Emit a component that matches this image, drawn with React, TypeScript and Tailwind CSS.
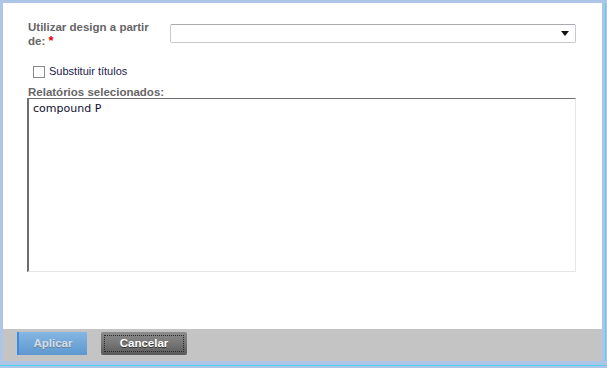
import React from "react";

export default function App() {
  const label = "font-bold text-[#666666]";
  return (
    <div
      className="w-[607px] h-[368px] bg-[#adc5e6] flex flex-col pt-[3px] pl-[3px] pr-[1px] overflow-hidden"
      style={{ fontFamily: '"Liberation Sans", Arial, sans-serif' }}
    >
      <div className="flex flex-1">
        <div className="flex flex-col w-[599px]">
          {/* content */}
          <div className="bg-white h-[326px] flex flex-col pl-[25px] pr-[23px] pt-[18px]">
            <div className="flex items-start">
              <div className={`${label} w-[141px] text-[11.5px] leading-[13px]`}>
                Utilizar design a partir
                <br />
                de: <span className="text-[#e00000] text-[13px]">*</span>
              </div>
              <div className="ml-[1px] w-[406px] h-[19px] mt-[3px] border border-[#c6c9d1] border-t-[#a9a9b0] rounded-[2px] flex items-center justify-end pr-[6px]">
                <svg width="8" height="5" viewBox="0 0 8 5">
                  <path d="M0 0 H8 L4 5 Z" fill="#111" />
                </svg>
              </div>
            </div>
            <div className="flex items-center mt-[17px] ml-[5px]">
              <div className="w-[12px] h-[12px] border border-[#8b8b8b] bg-white" />
              <span className="ml-[4px] text-[11px] text-[#1b1b4d] leading-[13px]">
                Substituir títulos
              </span>
            </div>
            <div className={`${label} mt-[8px] text-[11.5px] leading-[12px]`}>
              Relatórios selecionados:
            </div>
            <div className="mt-0 -ml-[1px] w-[549px] h-[174px] border-l-2 border-t border-l-[#6e6e6e] border-t-[#6e6e6e] border-r border-b border-r-[#e6e6e6] border-b-[#e6e6e6] pl-[4px] pt-[3px]">
              <div
                className="text-[11px] leading-[13px] text-[#101030]"
                style={{ fontFamily: '"DejaVu Sans", Verdana, sans-serif' }}
              >
                compound P
              </div>
            </div>
          </div>
          {/* footer */}
          <div className="bg-[#c4c4c4] h-[32px] flex items-start pt-[3px] pl-[14px]">
            <div className="w-[70px] h-[23px] border-l-2 border-l-[#3d8be0] bg-gradient-to-b from-[#84b6e2] to-[#5d98cf] flex items-center justify-center">
              <span className="text-[11.5px] font-bold text-[#d4dde6] [text-shadow:0_1px_0_#6a7f95]">
                Aplicar
              </span>
            </div>
            <div className="ml-[14px] w-[86px] h-[23px] rounded-[2px] bg-gradient-to-b from-[#8c8c8c] via-[#767676] to-[#5a5a5a] flex items-center justify-center p-[3px]">
              <div className="w-full h-full border border-dotted border-[#2a2a2a] flex items-center justify-center">
                <span className="text-[11.5px] font-bold text-white [text-shadow:0_1px_0_#333]">
                  Cancelar
                </span>
              </div>
            </div>
          </div>
        </div>
        <div className="w-[3px] bg-[#adc5e6]" />
        <div className="w-[1px] bg-[#4fd2ea]" />
      </div>
      <div className="h-[4px]" />
      <div className="h-[1px] bg-[#4fd2ea] -ml-[3px] w-[606px]" />
      <div className="h-[2px]" />
    </div>
  );
}
